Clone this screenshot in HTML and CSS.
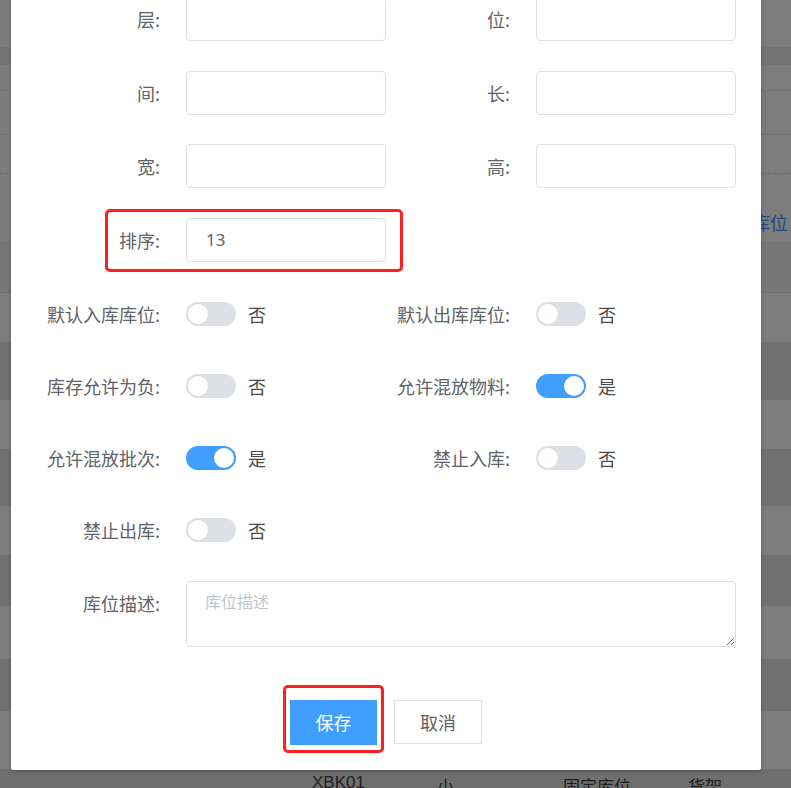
FILE: index.html
```html
<!DOCTYPE html>
<html lang="zh">
<head>
<meta charset="utf-8">
<title>库位编辑</title>
<link rel="stylesheet" href="styles.css">
</head>
<body>
<div class="page">
  <div class="band b0"></div>
  <div class="band b1"></div>
  <div class="band b2"></div>
  <div class="band b3"><span class="bg-input"></span></div>
  <div class="band b4"></div>
  <div class="band b5"><span class="bg-link">库位</span></div>
  <div class="band r mid h50"></div>
  <div class="band r light h50"></div>
  <div class="band r dark h57"></div>
  <div class="band r light h50"></div>
  <div class="band r dark h56"></div>
  <div class="band r light h50"></div>
  <div class="band r dark h50"></div>
  <div class="band r light h54"></div>
  <div class="band r dark h51"></div>
  <div class="band r light h59"></div>
  <div class="band r last">
    <span class="cell c1">XBK01</span>
    <span class="cell c2">小</span>
    <span class="cell c3">固定库位</span>
    <span class="cell c4">货架</span>
  </div>
</div>

<div class="modal">
  <form class="form">
    <div class="row input-row">
      <div class="item"><label class="label">层:</label><input class="input" type="text"></div>
      <div class="item"><label class="label">位:</label><input class="input" type="text"></div>
    </div>
    <div class="row input-row">
      <div class="item"><label class="label">间:</label><input class="input" type="text"></div>
      <div class="item"><label class="label">长:</label><input class="input" type="text"></div>
    </div>
    <div class="row input-row">
      <div class="item"><label class="label">宽:</label><input class="input" type="text"></div>
      <div class="item"><label class="label">高:</label><input class="input" type="text"></div>
    </div>
    <div class="row input-row last-input">
      <div class="item highlight-wrap">
        <span class="highlight sort-box"></span>
        <label class="label">排序:</label><input class="input" type="text" value="13">
      </div>
    </div>

    <div class="row switch-row">
      <div class="item"><label class="label">默认入库库位:</label><span class="switch"><span class="knob"></span></span><span class="sw-text">否</span></div>
      <div class="item"><label class="label">默认出库库位:</label><span class="switch"><span class="knob"></span></span><span class="sw-text">否</span></div>
    </div>
    <div class="row switch-row">
      <div class="item"><label class="label">库存允许为负:</label><span class="switch"><span class="knob"></span></span><span class="sw-text">否</span></div>
      <div class="item"><label class="label">允许混放物料:</label><span class="switch on"><span class="knob"></span></span><span class="sw-text">是</span></div>
    </div>
    <div class="row switch-row">
      <div class="item"><label class="label">允许混放批次:</label><span class="switch on"><span class="knob"></span></span><span class="sw-text">是</span></div>
      <div class="item"><label class="label">禁止入库:</label><span class="switch"><span class="knob"></span></span><span class="sw-text">否</span></div>
    </div>
    <div class="row switch-row">
      <div class="item"><label class="label">禁止出库:</label><span class="switch"><span class="knob"></span></span><span class="sw-text">否</span></div>
    </div>

    <div class="row text-row">
      <div class="item wide"><label class="label">库位描述:</label><textarea class="textarea" placeholder="库位描述"></textarea></div>
    </div>

    <div class="actions">
      <span class="btn-wrap"><span class="highlight save-box"></span><button type="button" class="btn primary">保存</button></span>
      <button type="button" class="btn plain">取消</button>
    </div>
  </form>
</div>
</body>
</html>
```
FILE: styles.css
```css
* { box-sizing: border-box; }
html, body {
  margin: 0;
  padding: 0;
  height: 100%;
  overflow: hidden;
}
body {
  background: #7c7c7c;
  font-family: "Noto Sans CJK SC", "Noto Sans", sans-serif;
  position: relative;
}

/* background page under the dim overlay */
.page { width: 100%; }
.band { width: 100%; position: relative; }
.b0 { height: 47px; background: #7c7c7c; }
.b1 { height: 18px; background: #747474; }
.b2 { height: 26px; background: #7c7c7c; border-bottom: 1px solid #727272; }
.b3 { height: 44px; background: #7c7c7c; border-bottom: 1px solid #727272; }
.b4 { height: 39px; background: #7c7c7c; border-bottom: 1px dashed #6c6c6c; }
.b5 { height: 69px; background: #7c7c7c; border-bottom: 1px solid #727272; }
.bg-input {
  position: absolute;
  left: 700px;
  top: 0;
  width: 66px;
  height: 44px;
  border: 1px solid #6e6e6e;
  border-radius: 4px;
}
.bg-link {
  position: absolute;
  left: 752px;
  top: 35px;
  font-size: 18px;
  color: #22487c;
}
.r { border-bottom: 1px solid #707070; }
.mid { background: #787878; }
.light { background: #7d7d7d; }
.dark { background: #717171; }
.h50 { height: 50px; }
.h51 { height: 51px; }
.h54 { height: 54px; }
.h56 { height: 56px; }
.h57 { height: 57px; }
.h59 { height: 59px; }
.last { height: 30px; background: #6e6e6e; border-bottom: 0; }
.cell {
  position: absolute;
  top: 3px;
  font-size: 17px;
  color: #1e1e1e;
  font-family: "Liberation Sans", "Noto Sans CJK SC", sans-serif;
}
.c1 { left: 312px; }
.c2 { left: 437px; }
.c3 { left: 563px; }
.c4 { left: 688px; }

/* modal */
.modal {
  position: absolute;
  left: 11px;
  top: -40px;
  width: 750px;
  height: 810px;
  background: #fff;
  box-shadow: 0 1px 4px rgba(0, 0, 0, 0.25);
  border-radius: 2px;
}
.form {
  padding-top: 37px;
  display: flex;
  flex-direction: column;
}
.row {
  display: flex;
  align-items: center;
}
.input-row { height: 44px; margin-bottom: 29.5px; }
.last-input { margin-bottom: 30px; }
.switch-row { height: 44px; margin-bottom: 28px; }
.text-row { align-items: flex-start; margin-top: 1px; }

.item {
  width: 350px;
  display: flex;
  align-items: center;
  position: relative;
}
.item.wide { width: 736px; align-items: flex-start; }
.label {
  width: 175px;
  flex: none;
  padding-right: 26px;
  text-align: right;
  font-size: 18px;
  line-height: 44px;
  color: #606266;
  white-space: nowrap;
}
.input {
  width: 200px;
  height: 44px;
  border: 1px solid #dcdfe6;
  border-radius: 4px;
  padding: 0 19px;
  font-size: 17px;
  font-family: "Noto Sans", "Noto Sans CJK SC", sans-serif;
  color: #606266;
  outline: none;
  background: #fff;
}
.textarea {
  width: 550px;
  height: 66px;
  border: 1px solid #dcdfe6;
  border-radius: 4px;
  padding: 7px 18px;
  font-size: 16px;
  line-height: 24px;
  font-family: "Noto Sans CJK SC", sans-serif;
  color: #606266;
  resize: vertical;
  outline: none;
}
.textarea::placeholder { color: #c0c4cc; }

.switch {
  width: 50px;
  height: 24px;
  border-radius: 12px;
  background: #dcdfe6;
  position: relative;
  flex: none;
}
.switch.on { background: #409eff; }
.knob {
  position: absolute;
  top: 2px;
  left: 2px;
  width: 20px;
  height: 20px;
  border-radius: 50%;
  background: #fff;
}
.switch.on .knob { left: 28px; }
.sw-text {
  margin-left: 12px;
  font-size: 18px;
  color: #4a4a4a;
}

.highlight {
  position: absolute;
  border: 3px solid #ff1f1f;
  border-radius: 5px;
  pointer-events: none;
}
.sort-box {
  left: 94px;
  top: -9px;
  width: 298px;
  height: 63px;
}

.actions {
  margin-top: 53px;
  display: flex;
  justify-content: center;
  align-items: flex-start;
  gap: 17px;
}
.btn-wrap { position: relative; display: inline-flex; }
.save-box {
  left: -7px;
  top: -15px;
  width: 101px;
  height: 68px;
}
.btn {
  font-family: "Noto Sans CJK SC", sans-serif;
  font-size: 18px;
  border-radius: 0;
  cursor: pointer;
  padding: 0;
}
.primary {
  width: 87px;
  height: 45px;
  background: #409eff;
  border: 1px solid #409eff;
  color: #fff;
}
.plain {
  width: 88px;
  height: 44px;
  background: #fff;
  border: 1px solid #dcdfe6;
  color: #606266;
}
```
